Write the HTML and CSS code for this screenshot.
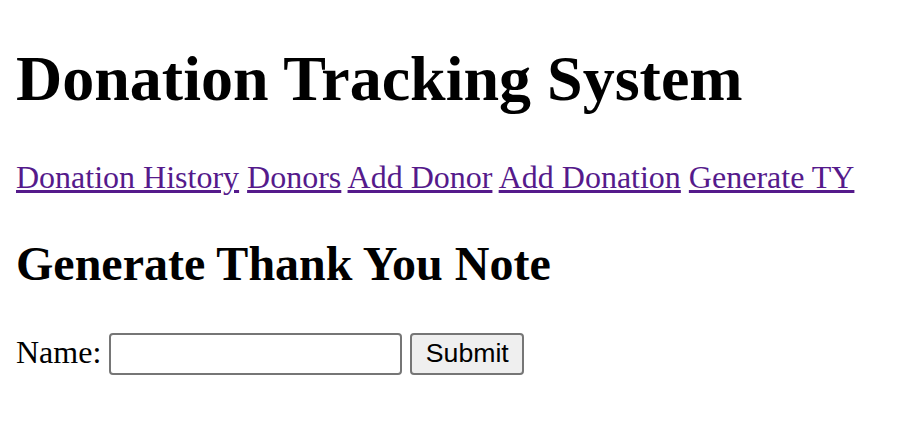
FILE: index.html
```html
<!DOCTYPE html>
<html>
<head>
<meta charset="utf-8">
<title>Donation Tracking System</title>
<link rel="stylesheet" href="styles.css">
</head>
<body class="page">
<h1 class="title">Donation Tracking System</h1>
<nav class="nav">
<a href="#" class="nav-link">Donation History</a>
<a href="#" class="nav-link">Donors</a>
<a href="#" class="nav-link">Add Donor</a>
<a href="#" class="nav-link">Add Donation</a>
<a href="#" class="nav-link">Generate TY</a>
</nav>
<h2 class="subtitle">Generate Thank You Note</h2>
<form class="form">
<label class="label" for="name">Name:</label>
<input class="text-input" type="text" id="name">
<button class="submit" type="button">Submit</button>
</form>
</body>
</html>
```
FILE: styles.css
```css
html, body {
  background: #ffffff;
}
.page {
  margin: 0 16px 16px;
  padding-top: 1px;
  font-family: "Liberation Serif", "Times New Roman", serif;
  font-size: 32px;
  color: #000000;
}
.title {
  font-size: 64px;
  font-weight: bold;
  margin: 41px 0 43px;
}
.nav {
  display: block;
  margin: 32px 0 30px;
}
.nav-link {
  color: #551a8b;
  text-decoration: underline;
}
.subtitle {
  font-size: 48px;
  font-weight: bold;
  margin: 39.84px 0 42px;
}
.form {
  margin: 0;
}
.label {
  font-size: 32px;
}
.text-input {
  font-family: "Liberation Sans", Arial, sans-serif;
  font-size: 26.67px;
  width: 293px;
  height: 42px;
  box-sizing: border-box;
  border: 2px solid #767676;
  border-radius: 4px;
  padding: 2px 4px;
  margin: 0;
  background: #fff;
}
.submit {
  font-family: "Liberation Sans", Arial, sans-serif;
  font-size: 26.67px;
  width: 114px;
  height: 42px;
  box-sizing: border-box;
  border: 2px solid #767676;
  border-radius: 4px;
  background: #efefef;
  color: #000;
  padding: 2px 0;
  margin: 0;
}
```
